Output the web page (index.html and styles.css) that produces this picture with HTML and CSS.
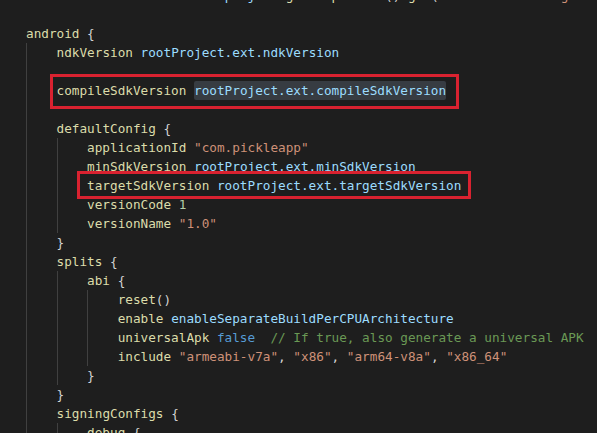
FILE: index.html
```html
<!DOCTYPE html>
<html lang="en">
<head>
    <meta charset="UTF-8">
    <link rel="stylesheet" href="styles.css">
</head>
<body>
    <div class="editor">
        <div class="ln"><span class="k">def</span> <span class="v">nativeArchitectures</span> = <span class="v">project</span>.<span class="f">getProperties</span>().<span class="f">get</span>(<span class="s">"reactNativeDebugArchitectures"</span>)</div>
        <div class="ln"></div>
        <div class="ln"><span class="f">android</span> {</div>
        <div class="ln"><span class="g"></span><span class="f">ndkVersion</span> <span class="v">rootProject.ext.ndkVersion</span></div>
        <div class="ln"><span class="g"></span></div>
        <div class="ln mark-line">
            <span class="g"></span><span class="f">compileSdkVersion</span> <span class="v sel">rootProject.ext.compileSdkVersion</span>
            <div class="mark mark-compile"></div>
        </div>
        <div class="ln"><span class="g"></span></div>
        <div class="ln"><span class="g"></span><span class="f">defaultConfig</span> {</div>
        <div class="ln"><span class="g"></span><span class="g"></span><span class="f">applicationId</span> <span class="s">"com.pickleapp"</span></div>
        <div class="ln"><span class="g"></span><span class="g"></span><span class="f">minSdkVersion</span> <span class="v">rootProject.ext.minSdkVersion</span></div>
        <div class="ln mark-line">
            <span class="g"></span><span class="g"></span><span class="f">targetSdkVersion</span> <span class="v">rootProject.ext.targetSdkVersion</span>
            <div class="mark mark-target"></div>
        </div>
        <div class="ln"><span class="g"></span><span class="g"></span><span class="f">versionCode</span> <span class="n">1</span></div>
        <div class="ln"><span class="g"></span><span class="g"></span><span class="f">versionName</span> <span class="s">"1.0"</span></div>
        <div class="ln"><span class="g"></span>}</div>
        <div class="ln"><span class="g"></span><span class="f">splits</span> {</div>
        <div class="ln"><span class="g"></span><span class="g"></span><span class="f">abi</span> {</div>
        <div class="ln"><span class="g"></span><span class="g"></span><span class="g"></span><span class="f">reset</span>()</div>
        <div class="ln"><span class="g"></span><span class="g"></span><span class="g"></span><span class="f">enable</span> <span class="v">enableSeparateBuildPerCPUArchitecture</span></div>
        <div class="ln"><span class="g"></span><span class="g"></span><span class="g"></span><span class="f">universalApk</span> <span class="k">false</span>  <span class="c">// If true, also generate a universal APK</span></div>
        <div class="ln"><span class="g"></span><span class="g"></span><span class="g"></span><span class="f">include</span> <span class="s">"armeabi-v7a"</span>, <span class="s">"x86"</span>, <span class="s">"arm64-v8a"</span>, <span class="s">"x86_64"</span></div>
        <div class="ln"><span class="g"></span><span class="g"></span>}</div>
        <div class="ln"><span class="g"></span>}</div>
        <div class="ln"><span class="g"></span><span class="f">signingConfigs</span> {</div>
        <div class="ln"><span class="g"></span><span class="g"></span><span class="f">debug</span> {</div>
    </div>
</body>
</html>
```

FILE: styles.css
```css
html, body {
    margin: 0;
    background-color: #1e1e1e;
    overflow: hidden;
}
.editor {
    margin-top: -14px;
    padding-left: 26px;
    font-family: "DejaVu Sans Mono", "Liberation Mono", monospace;
    font-size: 12.7px;
    line-height: 19px;
    color: #d4d4d4;
}
.ln {
    height: 19px;
    white-space: pre;
}
.mark-line {
    position: relative;
    white-space: normal;
}
.mark-line > span {
    white-space: pre;
}
/* indent guide, one per level */
.g {
    display: inline-block;
    width: 4ch;
    height: 19px;
    vertical-align: top;
    box-shadow: inset 1px 0 #404040;
}
.k { color: #569cd6; }
.f { color: #dcdcaa; }
.v { color: #9cdcfe; }
.s { color: #ce9178; }
.n { color: #b5cea8; }
.c { color: #6a9955; }
.sel {
    display: inline-block;
    background-color: #373c42;
    border-radius: 2px;
}
/* red annotation boxes drawn over the code */
.mark {
    position: absolute;
    border: 3px solid #d92230;
    box-sizing: border-box;
}
.mark-compile {
    top: -7px;
    left: 24px;
    width: 409px;
    height: 35px;
}
.mark-target {
    top: -5px;
    left: 51px;
    width: 394px;
    height: 28px;
}
```
